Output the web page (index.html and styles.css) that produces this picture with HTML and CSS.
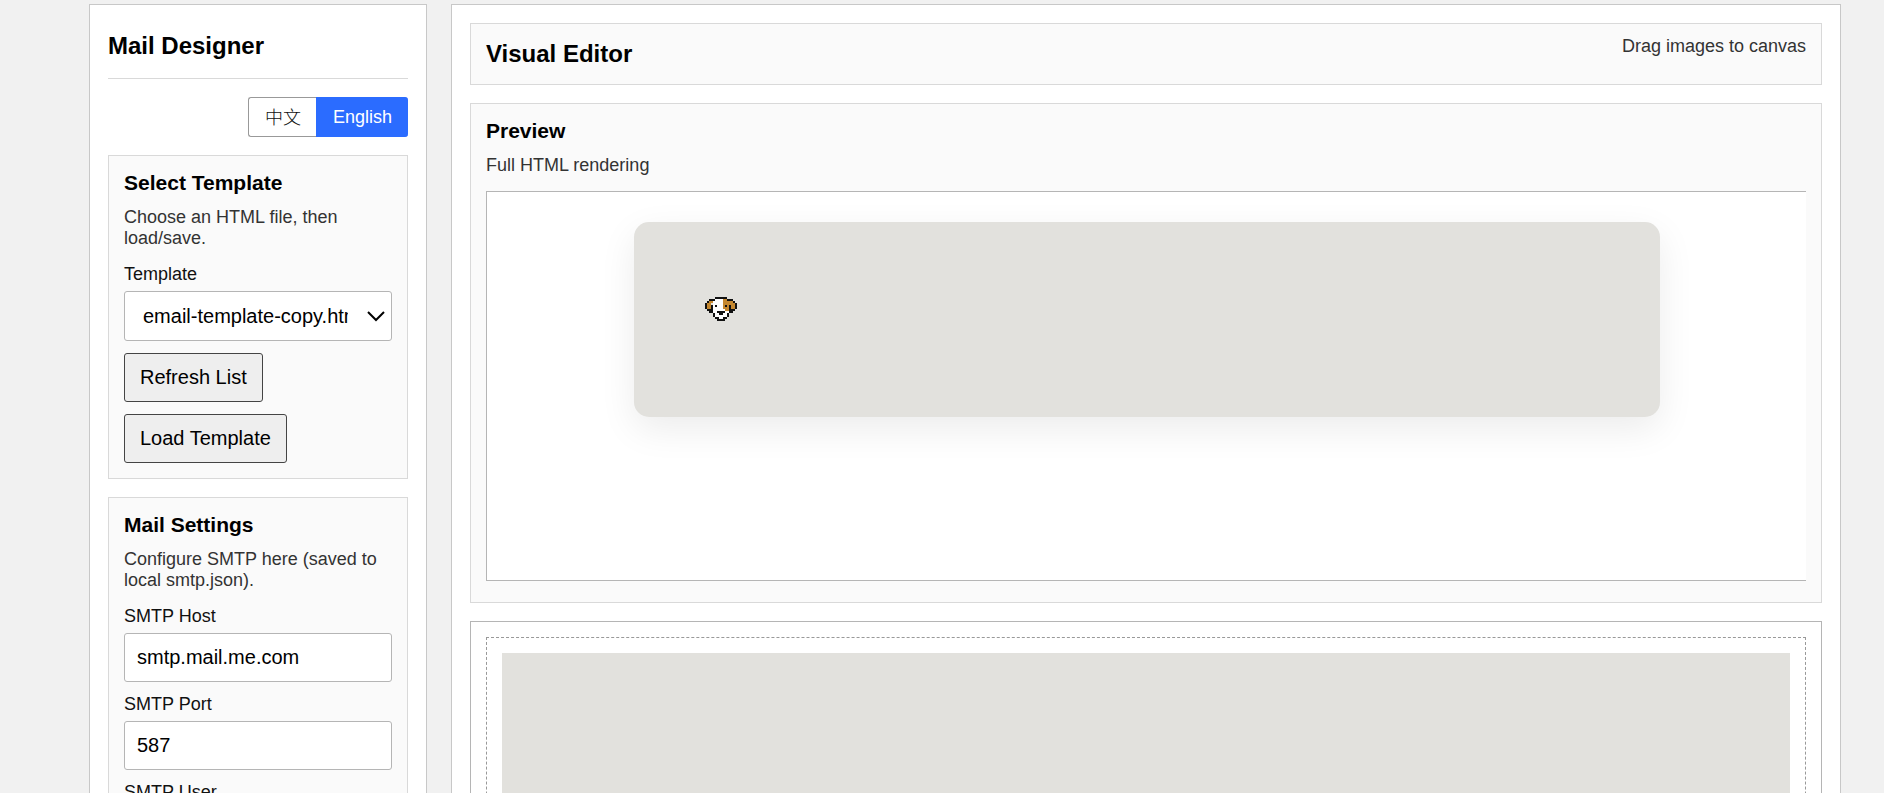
FILE: index.html
```
<!DOCTYPE html>
<html lang="en">
<head>
    <meta charset="UTF-8">
    <title>Mail Designer</title>
    <link rel="stylesheet" href="styles.css">
</head>
<body>
    <div class="app">
        <!-- Sidebar -->
        <aside class="panel sidebar">
            <h1>Mail Designer</h1>
            <div class="lang-switch">
                <button type="button" lang="zh">中文</button>
                <button type="button" class="active">English</button>
            </div>

            <section class="card">
                <h3>Select Template</h3>
                <p class="hint">Choose an HTML file, then load/save.</p>
                <label for="template">Template</label>
                <div class="select-wrap">
                    <select id="template">
                        <option>email-template-copy.html</option>
                    </select>
                    <svg class="chevron" width="18" height="12" viewBox="0 0 18 12" fill="none" stroke="#000" stroke-width="2">
                        <path d="M1 2 L9 10 L17 2"/>
                    </svg>
                </div>
                <div class="actions">
                    <button type="button" class="btn">Refresh List</button>
                    <button type="button" class="btn">Load Template</button>
                </div>
            </section>

            <section class="card">
                <h3>Mail Settings</h3>
                <p class="hint">Configure SMTP here (saved to local smtp.json).</p>
                <label for="smtpHost">SMTP Host</label>
                <input type="text" id="smtpHost" value="smtp.mail.me.com">
                <label for="smtpPort">SMTP Port</label>
                <input type="text" id="smtpPort" value="587">
                <label for="smtpUser">SMTP User</label>
                <input type="text" id="smtpUser">
            </section>
        </aside>

        <!-- Editor -->
        <main class="panel editor">
            <header class="card toolbar">
                <h2>Visual Editor</h2>
                <span class="hint">Drag images to canvas</span>
            </header>

            <section class="card preview">
                <h3>Preview</h3>
                <p class="hint">Full HTML rendering</p>
                <div class="frame">
                    <div class="mail">
                        <!-- Pixel dog -->
                        <svg class="dog" width="32" height="24" viewBox="0 0 16 12" shape-rendering="crispEdges">
                            <path fill="#fff" d="M5 1h5v1h-5zM4 2h6v7h-6zM10 6h2v3h-2zM5 9h6v1h-6zM7 10h2v1h-2z"/>
                            <path fill="#c4872f" d="M2 2h2v1h-2zM1 3h2v3h-2zM9 1h2v1h-2zM9 2h5v1h-5zM9 3h6v3h-6zM10 6h2v1h-2z"/>
                            <path fill="#111" d="M5 0h6v1h-6zM2 1h3v1h-3zM11 1h3v1h-3zM1 2h1v1h-1zM14 2h1v1h-1zM0 3h1v3h-1zM15 3h1v3h-1zM3 4h1v4h-1zM12 4h1v4h-1zM1 6h2v1h-2zM13 6h2v1h-2zM2 7h1v1h-1zM13 7h1v1h-1zM5 4h1v1h-1zM10 4h1v1h-1zM4 8h1v1h-1zM11 8h1v1h-1zM6 7h4v1h-4zM7 8h2v1h-2zM4 9h1v1h-1zM11 9h1v1h-1zM5 10h2v1h-2zM9 10h2v1h-2zM6 11h4v1h-4z"/>
                        </svg>
                    </div>
                </div>
            </section>

            <section class="canvas">
                <div class="drop-zone">
                    <div class="block"></div>
                </div>
            </section>
        </main>
    </div>
</body>
</html>
```

FILE: styles.css
```
* {
    box-sizing: border-box;
}

body {
    margin: 0;
    font-family: "Liberation Sans", Arial, "Noto Sans CJK SC", sans-serif;
    font-size: 18px;
    line-height: 21px;
    color: #111;
    background-color: #f1f1f1;
    height: 100vh;
    overflow: hidden;
}

.app {
    display: grid;
    grid-template-columns: 338px 1fr;
    gap: 24px;
    align-items: start;
    padding: 4px 43px 0 89px;
}

.panel {
    background-color: #fff;
    border: 1px solid #c8c8c8;
    padding: 18px;
}

.editor {
    display: flex;
    flex-direction: column;
    gap: 18px;
}

h1, h2, h3, p {
    margin: 0;
}

h1, h2 {
    font-size: 24px;
    line-height: 28px;
    color: #000;
}

h1 {
    padding: 9px 0 18px;
    border-bottom: 1px solid #d9d9d9;
}

h3 {
    font-size: 21px;
    line-height: 24px;
    color: #000;
}

.hint {
    color: #333;
}

/* Language switch */
.lang-switch {
    display: flex;
    justify-content: flex-end;
    margin: 18px 0;
}

.lang-switch button {
    height: 40px;
    padding: 2px 15px 0 16px;
    font: inherit;
    font-weight: 300;
    color: #111;
    background-color: #fff;
    border: 1px solid #999;
    border-right: none;
    border-radius: 3px 0 0 3px;
}

.lang-switch .active {
    padding: 0 16px;
    font-weight: 400;
    color: #fff;
    background-color: #2b6cff;
    border: 1px solid #2b6cff;
    border-right: none;
    border-radius: 0 3px 3px 0;
}

/* Cards */
.card {
    background-color: #fafafa;
    border: 1px solid #d9d9d9;
    padding: 15px;
}

.sidebar .card + .card {
    margin-top: 18px;
}

.card h3 {
    margin-bottom: 12px;
}

label {
    display: block;
    margin: 15px 0 6px;
}

input + label {
    margin-top: 12px;
}

input,
select {
    display: block;
    width: 100%;
    height: 49px;
    padding: 0 12px;
    font: inherit;
    font-size: 20px;
    color: #000;
    background-color: #fff;
    border: 1px solid #b5b5b5;
    border-radius: 3px;
}

select {
    appearance: none;
    height: 50px;
    padding: 0 43px 0 18px;
}

.select-wrap {
    position: relative;
}

.chevron {
    position: absolute;
    right: 7px;
    top: 19px;
    pointer-events: none;
}

.actions {
    display: flex;
    flex-direction: column;
    align-items: flex-start;
    gap: 12px;
    margin-top: 12px;
}

.btn {
    height: 49px;
    padding: 0 15px;
    font: inherit;
    font-size: 20px;
    color: #000;
    background-color: #eee;
    border: 1px solid #444;
    border-radius: 3px;
}

/* Visual editor */
.toolbar {
    display: flex;
    justify-content: space-between;
}

.toolbar h2 {
    line-height: 30px;
}

.toolbar .hint {
    line-height: 14px;
}

.frame {
    height: 390px;
    margin: 15px 0 6px;
    padding: 30px 146px 0 147px;
    background-color: #fff;
    border: 1px solid #b5b5b5;
    border-right: none;
    overflow: hidden;
}

.mail {
    height: 195px;
    padding: 75px 71px;
    background-color: #e2e1dd;
    border-radius: 15px;
    box-shadow: 0 12px 36px rgba(0, 0, 0, 0.08);
}

.dog {
    display: block;
}

.canvas {
    background-color: #fff;
    border: 1px solid #b5b5b5;
    padding: 15px;
}

.drop-zone {
    border: 1px dashed #999;
    padding: 15px;
}

.block {
    height: 300px;
    background-color: #e2e1dd;
}
```
